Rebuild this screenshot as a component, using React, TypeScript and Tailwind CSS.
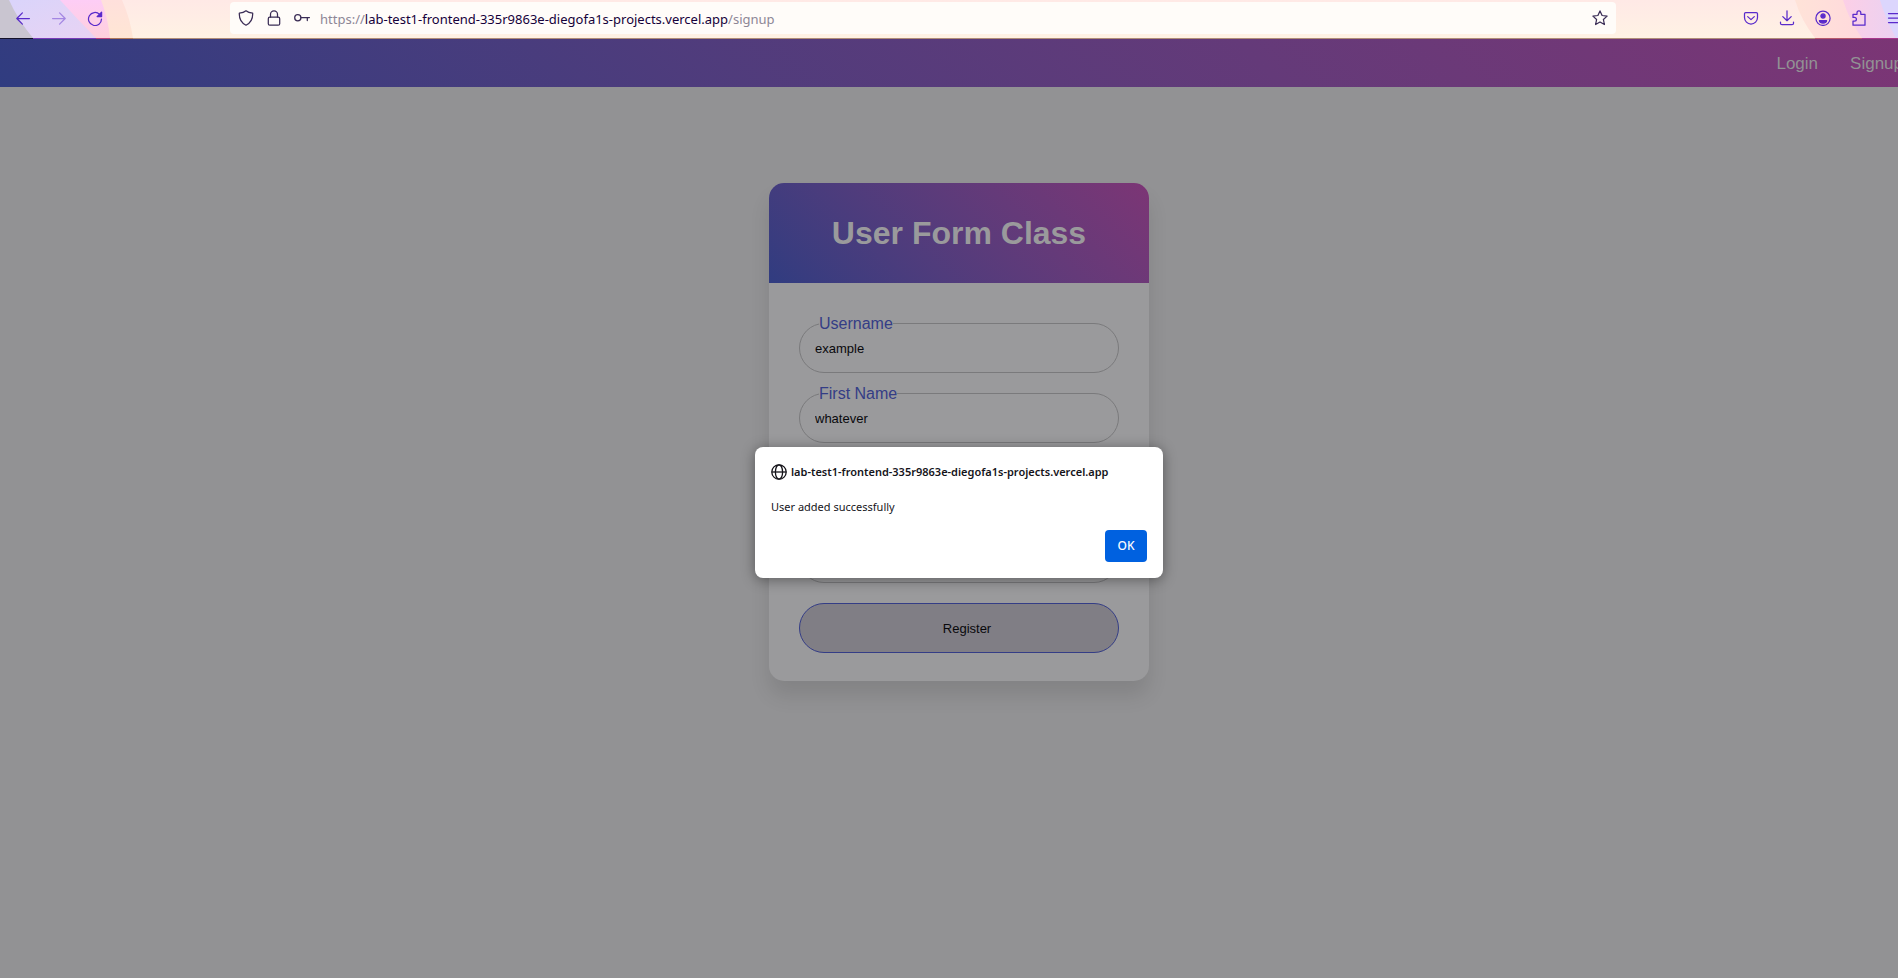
import React from "react";

type IconProps = { children: React.ReactNode; className?: string };

const Icon = ({ children, className = "" }: IconProps) => (
  <svg
    viewBox="0 0 16 16"
    className={`size-4 shrink-0 ${className}`}
    fill="none"
    stroke="currentColor"
    strokeWidth="1.25"
    strokeLinecap="round"
    strokeLinejoin="round"
    aria-hidden="true"
  >
    {children}
  </svg>
);

const ToolButton = ({
  label,
  disabled,
  children,
}: {
  label: string;
  disabled?: boolean;
  children: React.ReactNode;
}) => (
  <button
    type="button"
    aria-label={label}
    disabled={disabled}
    className="flex h-8 w-9 shrink-0 items-center justify-center text-[#592acb] disabled:opacity-45"
  >
    <Icon>{children}</Icon>
  </button>
);

const ThemeArt = () => (
  <>
    <svg
      viewBox="0 0 136 39"
      className="absolute top-0 left-0 h-[39px] w-[136px]"
      aria-hidden="true"
    >
      <defs>
        <linearGradient id="lavender" x1="0" y1="0" x2="1" y2="1">
          <stop offset="0" stopColor="#d9d4fb" />
          <stop offset="1" stopColor="#e8d3f3" />
        </linearGradient>
        <linearGradient id="rose" x1="0" y1="0" x2="0" y2="1">
          <stop offset="0" stopColor="#fdcdf6" />
          <stop offset="1" stopColor="#ffd0dc" />
        </linearGradient>
        <linearGradient id="peach" x1="0" y1="0" x2="0" y2="1">
          <stop offset="0" stopColor="#ffe0dc" />
          <stop offset="1" stopColor="#ffe6d4" />
        </linearGradient>
      </defs>
      <path d="M0 0H122Q130 18 133 38H0Z" fill="url(#peach)" />
      <path d="M0 0H101Q108 18 110 38H0Z" fill="url(#rose)" />
      <path d="M0 0H60Q78 20 96 38H0Z" fill="url(#lavender)" />
      <path d="M0 0H9Q18 20 33 38H0Z" fill="#c9c5d0" />
      <path d="M0 38h33v1H0z" fill="#15122a" />
      <path d="M33 38h63v1H33z" fill="#7a3cb8" />
      <path d="M96 38h14v1H96z" fill="#b8427c" />
      <path d="M110 38h23v1h-23z" fill="#b07858" />
    </svg>
    <svg
      viewBox="0 0 136 39"
      className="absolute top-0 right-0 h-[39px] w-[136px]"
      aria-hidden="true"
    >
      <defs>
        <linearGradient id="blush" x1="0" y1="0" x2="1" y2="0">
          <stop offset="0" stopColor="#ffe3d8" />
          <stop offset="1" stopColor="#ffd0e0" />
        </linearGradient>
        <linearGradient id="orchid" x1="0" y1="0" x2="1" y2="0">
          <stop offset="0" stopColor="#fccfe6" />
          <stop offset="1" stopColor="#e4d2f6" />
        </linearGradient>
      </defs>
      <path d="M13 0Q19 20 33 38H136V0Z" fill="url(#blush)" />
      <path d="M61 0Q67 20 80 38H136V0Z" fill="url(#orchid)" />
      <path d="M98 0Q104 20 114 38H136V0Z" fill="#dcd6fd" />
      <path d="M33 38h47v1H33z" fill="#b85a6c" />
      <path d="M80 38h56v1H80z" fill="#a8388c" />
    </svg>
  </>
);

const BrowserBar = () => (
  <header className="relative h-[39px] border-b border-[#b08d78] bg-linear-to-b from-[#ffe9e6] to-[#fff2e4]">
    <ThemeArt />
    <div className="relative flex items-center pt-0.5 pr-[5px] pl-[5px]">
      <div className="flex w-[225px] shrink-0">
        <ToolButton label="Back">
          <path d="M14.4 8.500H1.800M7.400 2.900L1.800 8.500l5.600 5.600" />
        </ToolButton>
        <ToolButton label="Forward" disabled>
          <path d="M1.600 8.500h12.600M8.600 2.900L14.200 8.500l-5.600 5.600" />
        </ToolButton>
        <ToolButton label="Reload">
          <path d="M12.600 4.400A6.500 6.500 0 1 0 14.500 9" />
          <path d="M14.600 2.100v4.500h-4.500z" fill="currentColor" />
        </ToolButton>
      </div>
      <div className="flex h-8 min-w-0 flex-1 items-center rounded bg-[#fffcf9] px-2 text-[#3a2c55]">
        <Icon className="mr-3">
          <path d="M8 .8C6.300 2.300 3.800 3 1.300 3.200 1.100 8.500 3.200 12.800 8 15.200c4.800-2.400 6.900-6.700 6.700-12C12.200 3 9.700 2.300 8 .8z" />
        </Icon>
        <Icon className="mr-3">
          <rect x="2.300" y="7.200" width="11.400" height="8" rx="1.500" />
          <path d="M4.500 7V4.300a3.500 3.500 0 0 1 7 0V7" />
        </Icon>
        <Icon className="mr-[10px]">
          <circle cx="3.800" cy="7.800" r="3.100" />
          <path d="M7 7.500h8.400M13.300 7.500v3" />
        </Icon>
        <p className="min-w-0 flex-1 truncate pt-0.5 font-['Noto_Sans',sans-serif] text-[13px] leading-5 text-[#8d8696]">
          https://
          <span className="text-[#15003a]">
            lab-test1-frontend-335r9863e-diegofa1s-projects.vercel.app
          </span>
          /signup
        </p>
        <Icon>
          <path d="M8 .9l2.100 4.600 5 .6-3.700 3.400 1 5L8 12l-4.400 2.500 1-5L.9 6.100l5-.6z" />
        </Icon>
      </div>
      <div className="ml-[117px] flex shrink-0">
        <ToolButton label="Save to Pocket">
          <path d="M2.700 2.600h10.600c.8 0 1.200.5 1.200 1.200v3.700a6.500 6.500 0 0 1-13 0V3.800c0-.7.400-1.200 1.200-1.200zM4.700 6.600L8 9.600l3.300-3" />
        </ToolButton>
        <ToolButton label="Downloads">
          <path d="M8 .8v9.800M3.800 6.600L8 10.700l4.200-4.100M1.500 12v1.200c0 .9.600 1.500 1.500 1.500h10c.9 0 1.500-.6 1.500-1.500V12" />
        </ToolButton>
        <ToolButton label="Account">
          <circle cx="8" cy="8.300" r="7.100" />
          <circle cx="8" cy="6" r="2.100" fill="currentColor" />
          <path d="M4.400 10.500h7.200c0 1.700-1.700 2.500-3.600 2.500s-3.600-.8-3.600-2.500z" fill="currentColor" />
        </ToolButton>
        <ToolButton label="Extensions">
          <path d="M2 15.200v-4h1.500a1.900 1.900 0 0 0 0-3.800H2V4.300h4V2.800a1.900 1.900 0 0 1 3.800 0v1.500H14v10.900z" />
        </ToolButton>
        <ToolButton label="Menu">
          <path d="M1.500 3.500h13M1.500 8h13M1.500 12.500h13" />
        </ToolButton>
      </div>
    </div>
  </header>
);

const Field = ({ id, label, value }: { id: string; label: string; value: string }) => (
  <div className="relative">
    <input
      id={id}
      defaultValue={value}
      className="block h-[50px] w-full rounded-[25px] border border-[#7a7a7c] px-[15px] text-[13px] text-[#09090c] outline-none"
    />
    <label
      htmlFor={id}
      className="absolute top-px left-5 -translate-y-1/2 bg-[#9a9a9c] text-base leading-5 text-[#343d86]"
    >
      {label}
    </label>
  </div>
);

const GlobeIcon = () => (
  <svg
    viewBox="0 0 16 16"
    className="size-4 shrink-0"
    fill="none"
    stroke="#15141a"
    strokeWidth="1.300"
    aria-hidden="true"
  >
    <circle cx="8" cy="8" r="7.200" />
    <ellipse cx="8" cy="8" rx="3.600" ry="7.200" />
    <path d="M.8 8h14.400" />
  </svg>
);

const AlertDialog = () => (
  <div
    role="alertdialog"
    aria-labelledby="alert-origin"
    aria-describedby="alert-message"
    className="absolute top-[408px] left-1/2 w-[408px] -translate-x-1/2 rounded-lg bg-white p-4 font-['Noto_Sans',sans-serif] text-[11px] text-[#15141a] shadow-[0_2px_14px_rgba(0,0,0,0.4)]"
  >
    <div className="flex items-center gap-1">
      <GlobeIcon />
      <h2 id="alert-origin" className="leading-[18px] font-semibold whitespace-nowrap">
        lab-test1-frontend-335r9863e-diegofa1s-projects.vercel.app
      </h2>
    </div>
    <p id="alert-message" className="mt-[17px] leading-[18px]">
      User added successfully
    </p>
    <div className="mt-[14px] flex justify-end">
      <button
        type="button"
        className="h-8 w-[42px] rounded bg-[#0061e0] text-xs font-medium text-[#fbfbfe]"
      >
        OK
      </button>
    </div>
  </div>
);

export default function App() {
  return (
    <div className="overflow-hidden font-['Liberation_Sans',Arial,sans-serif]">
      <div className="-mr-5 flex min-h-screen flex-col">
        <BrowserBar />
        <div className="relative flex-1 bg-[#929294]">
          <nav className="flex h-12 items-center justify-end gap-8 bg-linear-45 from-[#303c80] to-[#7c3575] px-[15px] pt-0.5 text-[17px] text-[#929294]">
            <a href="#login">Login</a>
            <a href="#signup">Signup</a>
          </nav>
          <main className="flex justify-center pt-24">
            <form className="w-[380px] overflow-hidden rounded-[15px] bg-[#9a9a9c] shadow-[0_15px_20px_rgba(0,0,0,0.1)]">
              <h1 className="flex h-[100px] items-center justify-center bg-linear-45 from-[#303c80] to-[#7c3575] text-[32px] font-bold text-[#9a9a9c]">
                User Form Class
              </h1>
              <div className="flex flex-col gap-5 px-[30px] pt-10 pb-7">
                <Field id="username" label="Username" value="example" />
                <Field id="first-name" label="First Name" value="whatever" />
                <div className="h-[50px] rounded-[25px] border border-[#7a7a7c]" />
                <div className="h-[50px] rounded-[25px] border border-[#7a7a7c]" />
                <button
                  type="button"
                  className="h-[50px] rounded-[25px] border border-[#343d86] bg-[#807e85] pt-0.5 pl-4 text-[13px] text-[#09090c]"
                >
                  Register
                </button>
              </div>
            </form>
          </main>
          <AlertDialog />
        </div>
      </div>
    </div>
  );
}
